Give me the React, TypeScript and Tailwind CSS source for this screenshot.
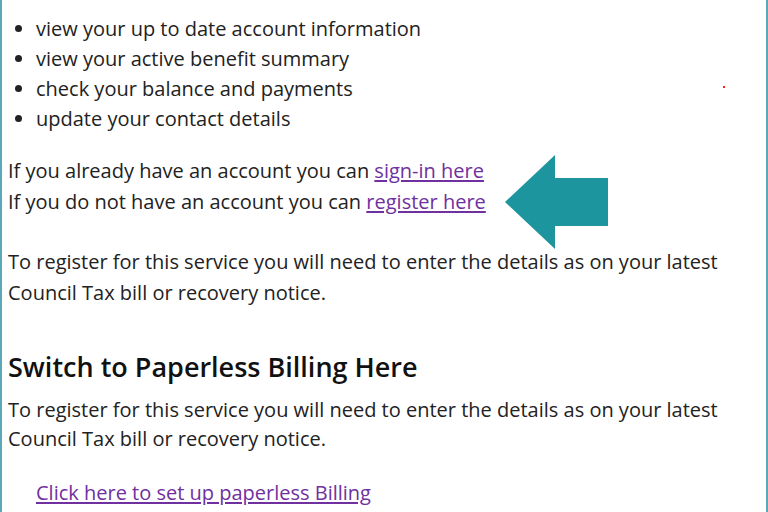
import React from "react";

export default function App() {
  return (
    <div
      className="relative w-[768px] h-[512px] overflow-hidden bg-white border-l-2 border-r-2 border-[#5aa8b8] text-[#222222]"
      style={{ fontFamily: '"Open Sans", sans-serif' }}
    >
      <div className="pl-[6px] pt-[14px] text-[20px] leading-[30px]">
        <ul className="list-disc pl-[28px]">
          <li>view your up to date account information</li>
          <li>view your active benefit summary</li>
          <li>check your balance and payments</li>
          <li>update your contact details</li>
        </ul>
        <p className="mt-[21px] leading-[31px]">
          If you already have an account you can{" "}
          <a className="text-[#7030a0] underline underline-offset-2">sign-in here</a>
          <br />
          If you do not have an account you can{" "}
          <a className="text-[#7030a0] underline underline-offset-2">register here</a>
        </p>
        <p className="mt-[29px] leading-[31px]">
          To register for this service you will need to enter the details as on your latest
          <br />
          Council Tax bill or recovery notice.
        </p>
        <h2 className="mt-[41px] text-[27px] leading-[36px] font-semibold text-[#111111]">
          Switch to Paperless Billing Here
        </h2>
        <p className="mt-[10px] leading-[29px]">
          To register for this service you will need to enter the details as on your latest
          <br />
          Council Tax bill or recovery notice.
        </p>
        <p className="mt-[25px] pl-[28px]">
          <a className="text-[#7030a0] underline underline-offset-2">Click here to set up paperless Billing</a>
        </p>
      </div>
      <svg className="absolute left-[502px] top-[154px]" width="106" height="96" viewBox="0 0 106 96">
        <polygon points="1,48 51,1 51,24 104,24 104,72 51,72 51,95" fill="#1c959e" />
      </svg>
      <div className="absolute left-[721px] top-[86px] w-[2px] h-[2px] bg-[#ff2020]" />
    </div>
  );
}
